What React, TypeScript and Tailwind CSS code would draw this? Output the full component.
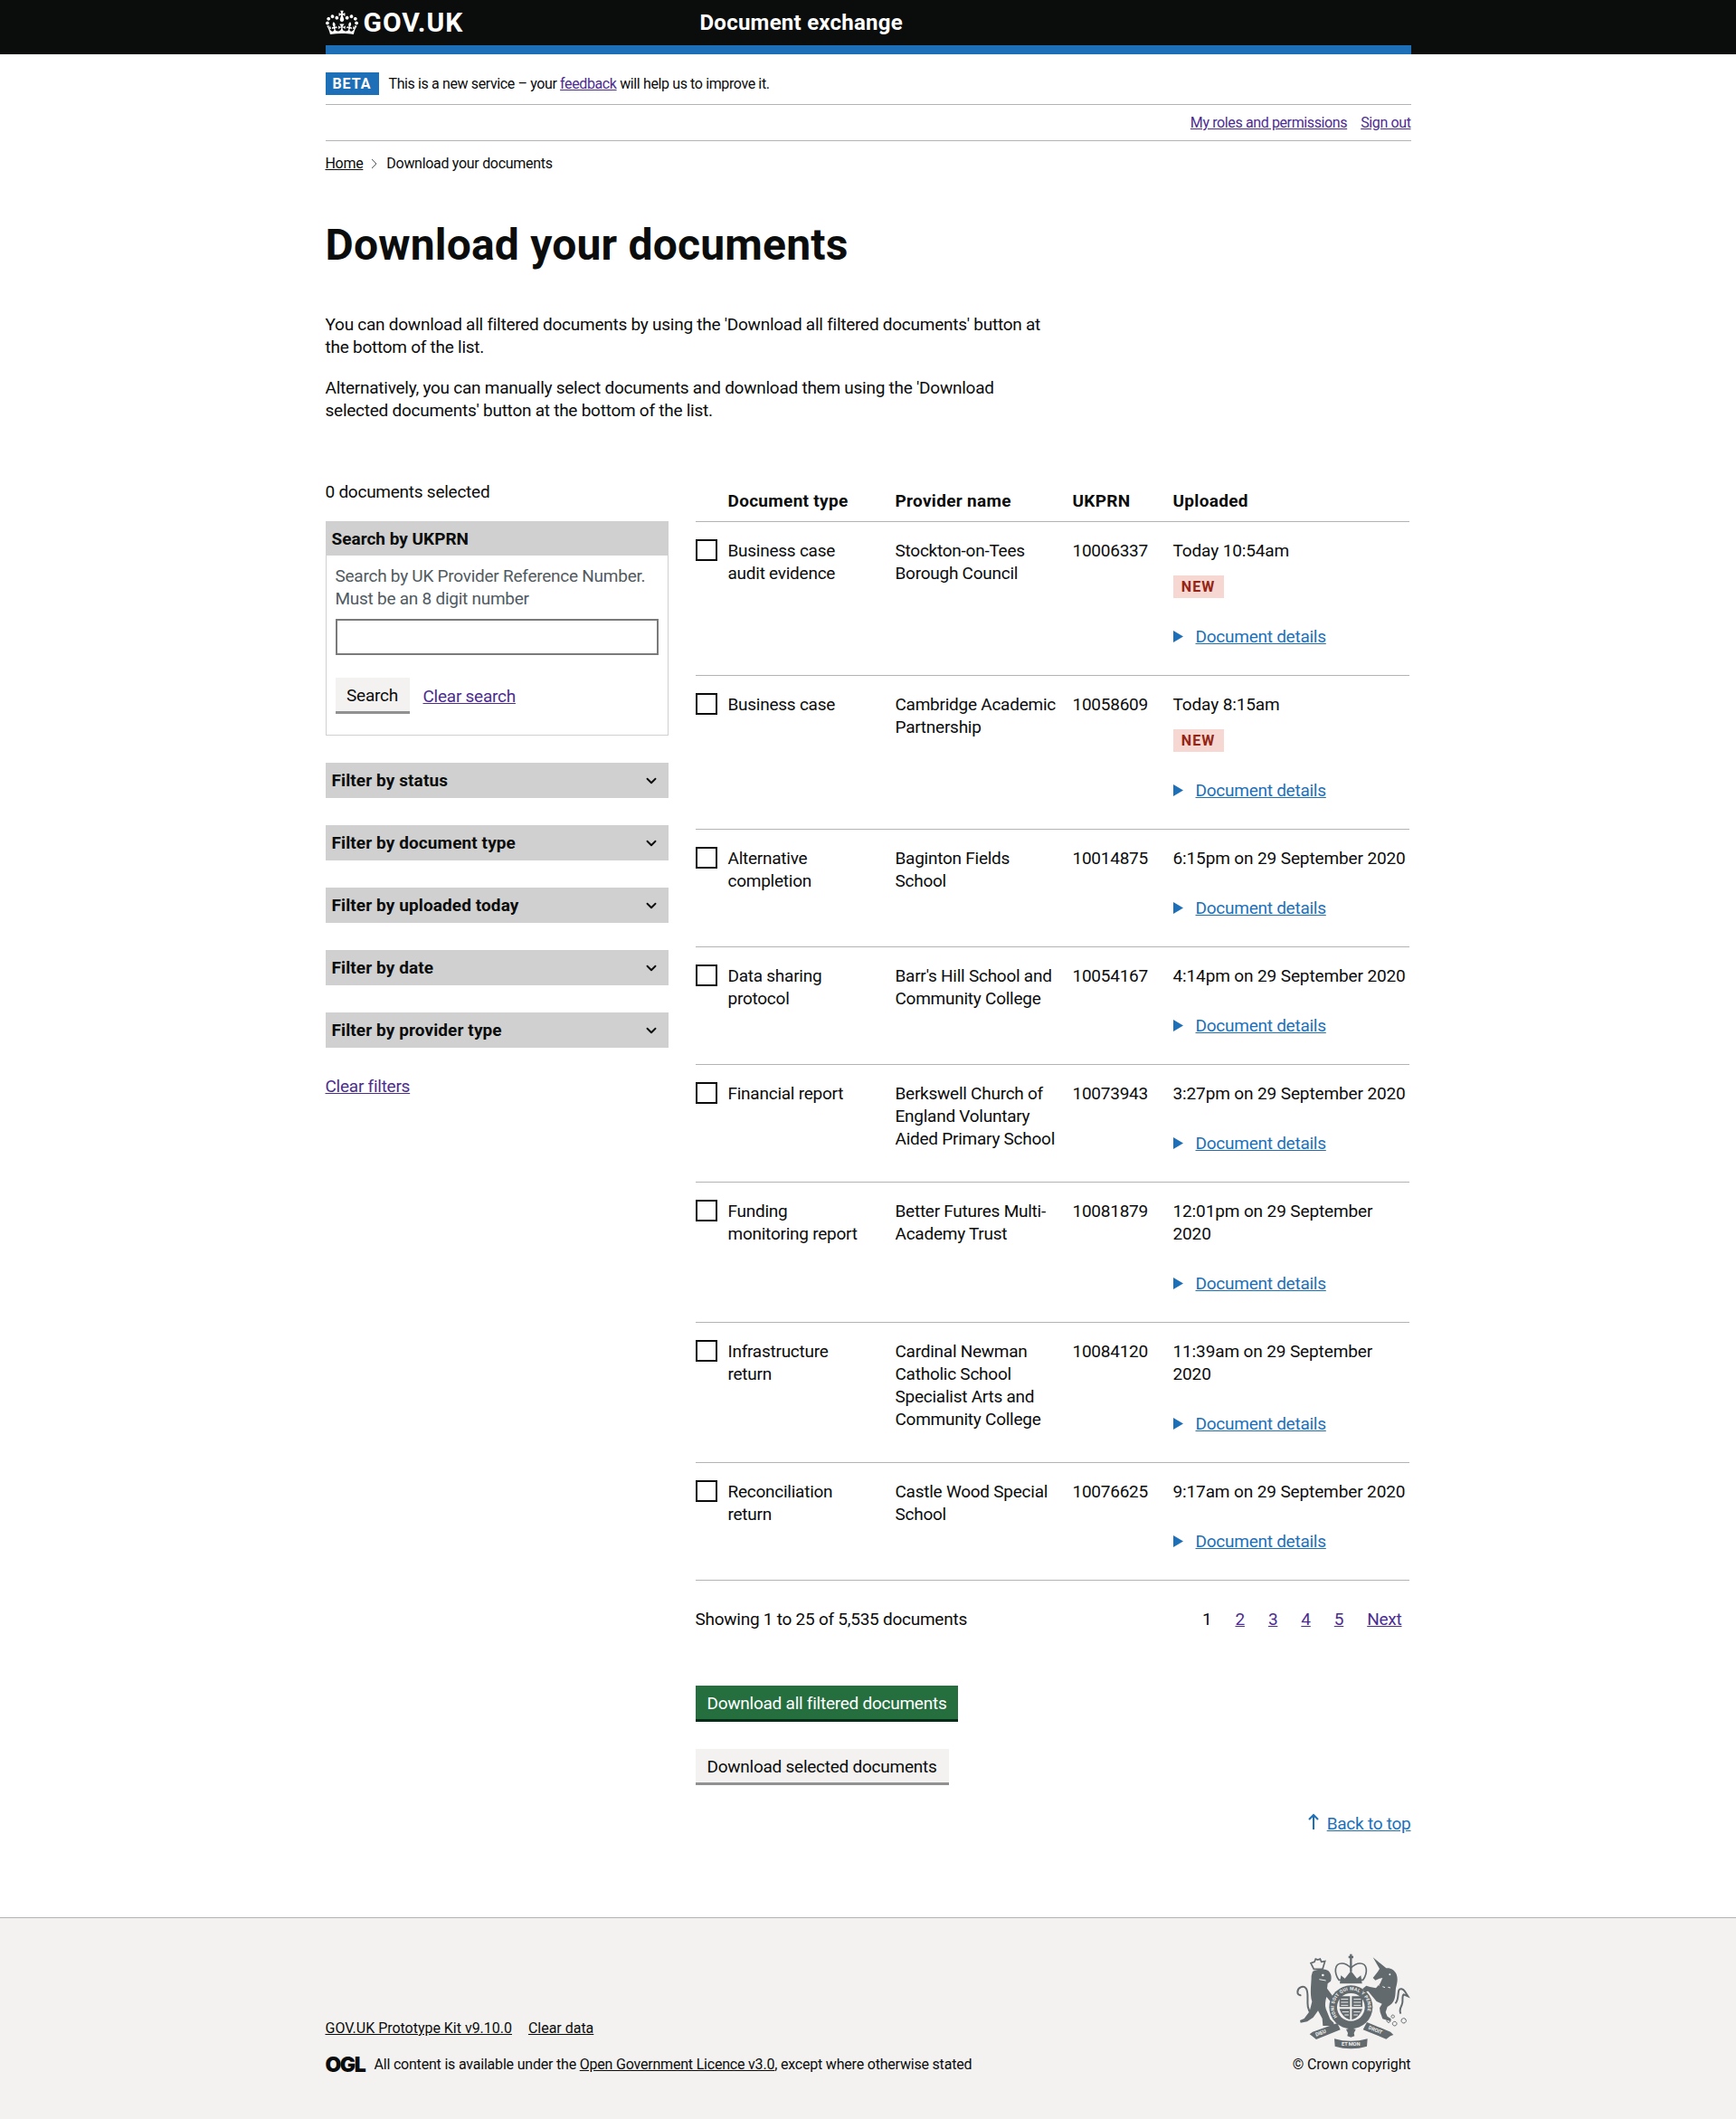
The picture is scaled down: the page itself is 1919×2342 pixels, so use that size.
import { ChevronDown } from 'lucide-react';

const rows = [
  { type: ['Business case', 'audit evidence'], provider: ['Stockton-on-Tees', 'Borough Council'], ukprn: '10006337', uploaded: ['Today 10:54am'], isNew: true },
  { type: ['Business case'], provider: ['Cambridge Academic', 'Partnership'], ukprn: '10058609', uploaded: ['Today 8:15am'], isNew: true },
  { type: ['Alternative', 'completion'], provider: ['Baginton Fields', 'School'], ukprn: '10014875', uploaded: ['6:15pm on 29 September 2020'] },
  { type: ['Data sharing', 'protocol'], provider: ["Barr's Hill School and", 'Community College'], ukprn: '10054167', uploaded: ['4:14pm on 29 September 2020'] },
  { type: ['Financial report'], provider: ['Berkswell Church of', 'England Voluntary', 'Aided Primary School'], ukprn: '10073943', uploaded: ['3:27pm on 29 September 2020'] },
  { type: ['Funding', 'monitoring report'], provider: ['Better Futures Multi-', 'Academy Trust'], ukprn: '10081879', uploaded: ['12:01pm on 29 September', '2020'] },
  { type: ['Infrastructure', 'return'], provider: ['Cardinal Newman', 'Catholic School', 'Specialist Arts and', 'Community College'], ukprn: '10084120', uploaded: ['11:39am on 29 September', '2020'] },
  { type: ['Reconciliation', 'return'], provider: ['Castle Wood Special', 'School'], ukprn: '10076625', uploaded: ['9:17am on 29 September 2020'] },
];

const filters = ['Filter by status', 'Filter by document type', 'Filter by uploaded today', 'Filter by date', 'Filter by provider type'];

function Lines({ items }: { items: string[] }) {
  return (
    <>
      {items.map((line) => (
        <div key={line}>{line}</div>
      ))}
    </>
  );
}

function Crown() {
  return (
    <svg viewBox="0 0 132 97" width="36" height="30" className="fill-white shrink-0">
      <path
        fillRule="evenodd"
        d="M25 30.2c3.5 1.5 7.7-.2 9.1-3.7 1.5-3.6-.2-7.8-3.9-9.2-3.6-1.4-7.6.3-9.1 3.9-1.4 3.5.3 7.5 3.9 9zM9 39.5c3.6 1.5 7.8-.2 9.2-3.7 1.5-3.6-.2-7.8-3.9-9.1-3.6-1.5-7.6.2-9.1 3.8-1.4 3.5.3 7.5 3.8 9zM4.4 57.2c3.5 1.5 7.7-.2 9.1-3.8 1.5-3.6-.2-7.7-3.9-9.1-3.5-1.5-7.6.3-9.1 3.8-1.4 3.5.3 7.6 3.9 9.1zm38.3-21.4c3.5 1.5 7.7-.2 9.1-3.8 1.5-3.6-.2-7.7-3.9-9.1-3.6-1.5-7.6.3-9.1 3.8-1.3 3.6.4 7.7 3.9 9.1zm64.4-5.6c-3.6 1.5-7.8-.2-9.1-3.7-1.5-3.6.2-7.8 3.8-9.2 3.6-1.4 7.7.3 9.2 3.9 1.3 3.5-.4 7.5-3.9 9zm15.9 9.3c-3.6 1.5-7.7-.2-9.1-3.7-1.5-3.6.2-7.8 3.7-9.1 3.6-1.5 7.7.2 9.2 3.8 1.5 3.5-.3 7.5-3.8 9zm4.7 17.7c-3.6 1.5-7.8-.2-9.2-3.8-1.5-3.6.2-7.7 3.9-9.1 3.6-1.5 7.7.3 9.2 3.8 1.3 3.5-.4 7.6-3.9 9.1zM89.3 35.8c-3.6 1.5-7.8-.2-9.2-3.8-1.4-3.6.2-7.7 3.9-9.1 3.6-1.5 7.7.3 9.2 3.8 1.4 3.6-.3 7.7-3.9 9.1zM69.7 17.7l8.9 4.7V9.3l-8.9 2.8c-.2-.3-.5-.6-.9-.9L72.4 0H59.6l3.5 11.2c-.3.3-.6.5-.9.9l-8.8-2.8v13.1l8.8-4.7c.3.3.6.7.9.9l-5 15.4v.1c-.2.8-.4 1.6-.4 2.4 0 4.1 3.1 7.5 7 8.1h.2c.3 0 .7.1 1 .1.4 0 .7 0 1-.1h.2c4-.6 7.1-4.1 7.1-8.1 0-.8-.1-1.7-.4-2.4V34l-5.1-15.4c.4-.2.7-.6 1-.9zM66 92.8c16.9 0 32.8 1.1 47.1 3.2 4-16.9 8.9-26.7 14-33.5l-9.6-3.4c1 4.9 1.1 7.2 0 10.2-1.5-1.4-3-4.3-4.2-8.7L108.6 76c2.8-2 5-3.2 7.5-3.3-4.4 9.4-10 11.9-13.6 11.2-4.3-.8-6.3-4.6-5.6-7.9 1-4.7 5.7-5.9 8-.5 4.3-8.7-3-11.4-7.6-8.8 7.1-7.2 7.9-13.5 2.1-21.1-8 6.1-8.1 12.3-4.5 20.8-4.7-5.4-12.1-2.5-9.5 6.2 3.4-5.2 7.9-2 7.2 3.1-.6 4.3-6.4 7.8-13.5 7.2-10.3-.9-10.9-8-11.2-13.8 2.5-.5 7.1 1.8 11 7.3L80.2 60c-4.1 4.4-8 5.3-12.3 5.4 1.4-4.4 8-11.6 8-11.6H55.5s6.4 7.2 7.9 11.6c-4.2-.1-8-1-12.3-5.4l1.4 16.4c3.9-5.5 8.5-7.7 10.9-7.3-.3 5.8-.9 12.8-11.1 13.8-7.2.6-12.9-2.9-13.5-7.2-.7-5 3.8-8.3 7.1-3.1 2.7-8.7-4.6-11.6-9.4-6.2 3.7-8.5 3.6-14.7-4.6-20.8-5.8 7.6-5 13.9 2.2 21.1-4.7-2.6-11.9.1-7.7 8.8 2.3-5.5 7.1-4.2 8.1.5.7 3.3-1.3 7.1-5.7 7.9-3.5.7-9-1.8-13.5-11.2 2.5.1 4.7 1.3 7.5 3.3l-4.7-15.4c-1.2 4.4-2.7 7.2-4.3 8.7-1.1-3-.9-5.3 0-10.2l-9.5 3.4c5 6.9 9.9 16.7 14 33.5 14.8-2.1 30.8-3.2 47.7-3.2z"
      />
    </svg>
  );
}

// royal arms, redrawn by eye; viewBox follows a 3x crop of the footer
function Crest() {
  return (
    <svg viewBox="0 0 420 345" width="140" height="115" className="fill-[#626a6e] -mr-[5px]">
      {/* lion */}
      <path d="M82 64L72 44l12-4 4-10 7 3 8-3 4 10 12-2-8 26z" className="fill-none stroke-[#626a6e] stroke-[5]" />
      <path d="M78 72c12-8 38-10 50-4 12 8 14 24 10 36l-10 8-2 16 22 30 16 16-6 8-22-12-12-14c-4 14-6 28-2 40l14 34 12 12 2 10-38 0-2-24-14-26-16 22-20 14-22 4-2-8 14-6 18-24 8-32c-8-30-2-58-2-86z" />
      <path d="M74 212C50 190 70 146 56 128c-10-12-28-2-28 12 0 8 6 12 12 10" className="fill-none stroke-[#626a6e] stroke-[6]" />
      <circle cx="112" cy="84" r="4" className="fill-[#f3f2f1]" />
      <path d="M100 98l22 4" className="fill-none stroke-[#f3f2f1] stroke-[3]" />
      {/* unicorn */}
      <path d="M278 25l44 36c14-2 28 6 34 20 6 16 2 30-2 46-2 16 0 30-8 44-6 10-14 14-20 18l-6 18 6 14 12 8-2 8-26-8-8-22-2-14 8-14-18-8-20-24-8-10-12 2-6-10 12-10 12 4 20 4 14-16 8-18-10 2-14 6-8-8 16-20 6-10z" />
      <path d="M352 178c12-10 8-34 12-44 4-8 14-4 20 4l10 16-14-6c-8 6 0 22-6 34-4 10-10 18-4 30" className="fill-none stroke-[#626a6e] stroke-[6]" />
      <path d="M330 241a6 6 0 1 1 .1 0zM350 252a7 7 0 1 1 .1 0zM380 243a8 8 0 1 1 .1 0zM344 226a5 5 0 1 1 .1 0z" className="fill-none stroke-[#626a6e] stroke-[3]" />
      <path d="M292 112l8 6M310 122l8 3M328 124l8 2" className="fill-none stroke-[#f3f2f1] stroke-[3]" />
      <circle cx="334" cy="82" r="3" className="fill-[#f3f2f1]" />
      {/* crown */}
      <path d="M165 100c-17-25-15-55 10-55 15 0 25 10 30 15 5-5 15-15 30-15 25 0 27 30 10 55z" className="fill-none stroke-[#626a6e] stroke-[5]" />
      <path d="M168 112l4-27 13 10 20-25 20 25 13-10 4 27z" />
      <path d="M205 14v58M197 24h16" className="fill-none stroke-[#626a6e] stroke-[7]" />
      {/* garter and shield */}
      <circle cx="205" cy="190" r="72" />
      <path id="garter" d="M205 246a56 56 0 1 1 .1 0z" fill="none" />
      <text fontSize="15" fontWeight="700" className="fill-[#f3f2f1]" letterSpacing="1">
        <textPath href="#garter" startOffset="15%">HONI SOIT QUI MAL Y PENSE</textPath>
      </text>
      <circle cx="205" cy="190" r="46" className="fill-[#f3f2f1]" />
      <path d="M167 154h35v36h-35zM208 154h35v36h-35zM167 196h35v36c-16-4-30-18-35-36zM208 196h35c-5 18-19 32-35 36z" />
      <path d="M172 164h24M172 174h24M172 184h24M214 164h24M214 174h24M214 184h24M214 206h22M214 216h14M176 206h22M184 216h14" className="fill-none stroke-[#f3f2f1] stroke-[3]" />
      {/* motto */}
      <path d="M160 243L78 272l-10 8 8 6 14 11 80-32z" />
      <path d="M150 295c35 10 75 10 110 0l-2 25c-33 10-73 10-106 0z" />
      <path d="M258 240l78 32 10 10-10 4-14 10-77-31z" />
      <path d="M205 252l6 8 10 4-6 12 2 10-12 4-12-4 2-10-6-12 10-4z" />
      <text x="90" y="287" fontSize="17" fontWeight="700" className="fill-[#f3f2f1]" transform="rotate(-20 90 287)">DIEU</text>
      <text x="174" y="319" fontSize="17" fontWeight="700" className="fill-[#f3f2f1]">ET MON</text>
      <text x="262" y="262" fontSize="17" fontWeight="700" className="fill-[#f3f2f1]" transform="rotate(22 262 262)">DROIT</text>
    </svg>
  );
}

export default function App() {
  return (
    <div className="font-['Roboto',sans-serif] text-[#0b0c0c] text-[19px] leading-[25px] tracking-[-0.25px] bg-white">
      {/* Header */}
      <header className="bg-[#0b0c0c] h-[60px]">
        <div className="w-[1200px] mx-auto h-[60px] border-b-[10px] border-[#1d70b8] flex items-center text-white">
          <div className="w-[414px] flex items-center gap-[6px]">
            <Crown />
            <span className="font-bold text-[30px] leading-[30px] tracking-[1px]">GOV.UK</span>
          </div>
          <span className="font-bold text-[24px] leading-[30px] tracking-[0.25px]">Document exchange</span>
        </div>
      </header>

      <div className="w-[1200px] mx-auto">
        {/* Phase banner */}
        <div className="pt-5 pb-[10px] border-b border-[#b1b4b6] flex items-center gap-[11px] text-[16px] leading-[20px] tracking-[-0.38px]">
          <span className="bg-[#1d70b8] text-white font-bold tracking-[1px] w-[59px] h-[25px] flex items-center justify-center">BETA</span>
          <span>
            This is a new service – your <a className="underline text-[#4c2c92]">feedback</a> will help us to improve it.
          </span>
        </div>

        {/* Account links */}
        <div className="h-[40px] border-b border-[#b1b4b6] flex items-center justify-end gap-[15px] text-[16px] tracking-[-0.38px] text-[#4c2c92]">
          <a className="underline">My roles and permissions</a>
          <a className="underline">Sign out</a>
        </div>

        {/* Breadcrumbs */}
        <div className="mt-[15px] flex items-center text-[16px] leading-[20px] tracking-[-0.3px]">
          <a className="underline">Home</a>
          <svg viewBox="0 0 10 12" className="w-[10px] h-[12px] mx-[8px] fill-none stroke-[#505a5f] stroke-1">
            <path d="M2 1l5 5-5 5" />
          </svg>
          <span>Download your documents</span>
        </div>

        <h1 className="mt-[55px] text-[48px] leading-[50px] font-bold tracking-[0.2px]">Download your documents</h1>

        <div className="mt-[50px] w-[800px]">
          <p>You can download all filtered documents by using the 'Download all filtered documents' button at the bottom of the list.</p>
          <p className="mt-5">Alternatively, you can manually select documents and download them using the 'Download selected documents' button at the bottom of the list.</p>
        </div>

        <div className="mt-[65px] flex items-start">
          {/* Sidebar */}
          <aside className="w-[379px] shrink-0 mr-[30px]">
            <div>0 documents selected</div>
            <div className="mt-5 border border-[#d0d0d0]">
              <div className="bg-[#d0d0d0] h-[37px] px-[6px] flex items-center font-bold tracking-normal">Search by UKPRN</div>
              <div className="px-[10px] pt-[10px] pb-[23px]">
                <div className="text-[#505a5f]">
                  Search by UK Provider Reference Number.
                  <br />
                  Must be an 8 digit number
                </div>
                <input className="mt-[10px] block w-full h-[40px] border-2 border-[#7a7a7a] bg-white" />
                <div className="mt-[25px] flex items-center gap-[15px]">
                  <button className="bg-[#f3f2f1] shadow-[0_3px_0_#929191] h-[37px] mb-[3px] px-[12px] pt-[1px] w-[82px]">Search</button>
                  <a className="underline text-[#4c2c92]">Clear search</a>
                </div>
              </div>
            </div>

            <div className="mt-[30px] flex flex-col gap-[30px]">
              {filters.map((f) => (
                <div key={f} className="bg-[#d0d0d0] h-[39px] pl-[7px] pr-[10px] flex items-center justify-between font-bold tracking-[0.1px]">
                  <span>{f}</span>
                  <ChevronDown className="w-[18px] h-[18px] text-[#0b0c0c]" strokeWidth={2.5} />
                </div>
              ))}
            </div>

            <a className="block mt-[30px] underline text-[#4c2c92]">Clear filters</a>
          </aside>

          {/* Documents */}
          <main className="flex-1 pr-[2px]">
            <div className="pt-[10px] pb-[10px] border-b border-[#b1b4b6] grid grid-cols-[36px_185px_196px_111px_1fr] font-bold tracking-[0.3px]">
              <div />
              <div>Document type</div>
              <div>Provider name</div>
              <div>UKPRN</div>
              <div>Uploaded</div>
            </div>

            {rows.map((row) => (
              <div key={row.ukprn} className="pt-[19px] pb-[30px] border-b border-[#b1b4b6] grid grid-cols-[36px_185px_196px_111px_1fr]">
                <div className="w-6 h-6 border-2 border-[#0b0c0c]" />
                <div><Lines items={row.type} /></div>
                <div><Lines items={row.provider} /></div>
                <div>{row.ukprn}</div>
                <div>
                  <div className="tracking-[-0.12px]"><Lines items={row.uploaded} /></div>
                  {row.isNew && (
                    <span className="mt-[15px] flex items-center justify-center w-[56px] h-[25px] bg-[#f6d7d2] text-[#942514] text-[16px] font-bold tracking-[1px]">NEW</span>
                  )}
                  <div className="mt-[30px] flex items-center text-[#1d70b8]">
                    <svg viewBox="0 0 12 14" className="w-[11px] h-[13px] mr-[14px] fill-[#1d70b8]">
                      <path d="M0 0l12 7-12 7z" />
                    </svg>
                    <a className="underline">Document details</a>
                  </div>
                </div>
              </div>
            ))}

            {/* Pagination */}
            <div className="mt-[30px] flex items-center justify-between pr-[8px]">
              <span>Showing 1 to 25 of 5,535 documents</span>
              <div className="flex items-center gap-[26px]">
                <span>1</span>
                <a className="underline text-[#4c2c92]">2</a>
                <a className="underline text-[#4c2c92]">3</a>
                <a className="underline text-[#4c2c92]">4</a>
                <a className="underline text-[#4c2c92]">5</a>
                <a className="underline text-[#4c2c92]">Next</a>
              </div>
            </div>

            <div className="mt-[61px] flex flex-col items-start gap-[30px]">
              <button className="bg-[#256f3f] text-white shadow-[0_3px_0_#002d18] h-[37px] mb-[3px] px-[13px] pt-[1px]">Download all filtered documents</button>
              <button className="bg-[#f3f2f1] shadow-[0_3px_0_#929191] h-[37px] mb-[3px] px-[13px] pt-[1px]">Download selected documents</button>
            </div>

            <div className="mt-[30px] -mr-[2px] flex items-center justify-end gap-[8px] text-[#1d70b8]">
              <svg viewBox="0 0 14 18" className="w-[14px] h-[18px] fill-none stroke-[#1d70b8] stroke-2 -mt-[6px]">
                <path d="M7 18V2M2 7l5-5 5 5" />
              </svg>
              <a className="underline">Back to top</a>
            </div>
          </main>
        </div>
      </div>

      {/* Footer */}
      <footer className="mt-[91px] h-[223px] bg-[#f3f2f1] border-t border-[#b1b4b6]">
        <div className="w-[1200px] mx-auto h-full flex justify-between text-[16px] leading-[20px] pb-[50px]">
          <div className="self-end">
            <div className="flex gap-[18px] tracking-[-0.02px]">
              <a className="underline">GOV.UK Prototype Kit v9.10.0</a>
              <a className="underline">Clear data</a>
            </div>
            <div className="mt-[20px] flex items-center gap-[12px] tracking-[-0.2px]">
              <span className="w-[42px] font-['Inter',sans-serif] font-black text-[23px] leading-[20px] tracking-[-1.5px]">OGL</span>
              <span>
                All content is available under the <a className="underline">Open Government Licence v3.0</a>, except where otherwise stated
              </span>
            </div>
          </div>
          <div className="self-end flex flex-col items-end">
            <Crest />
            <span className="mt-[2px] tracking-[-0.1px]">© Crown copyright</span>
          </div>
        </div>
      </footer>
    </div>
  );
}
